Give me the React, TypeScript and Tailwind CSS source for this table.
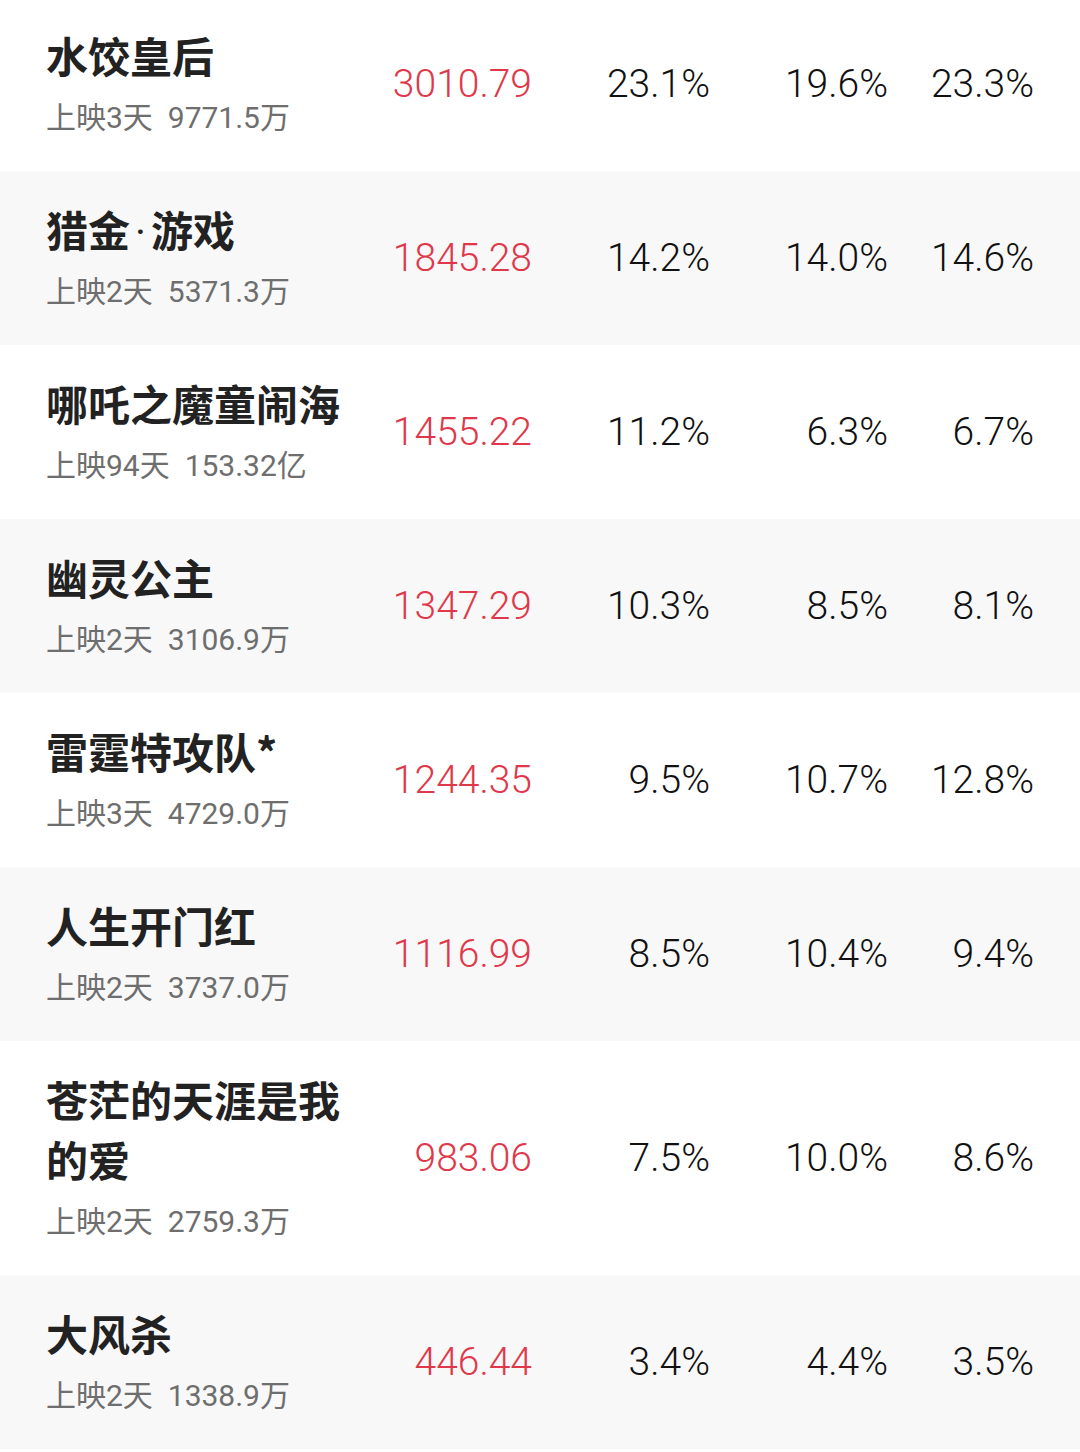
type Movie = {
  name: string;
  days: string;
  total: string;
  box: string;
  share: string;
  shows: string;
  seats: string;
};

const movies: Movie[] = [
  { name: "水饺皇后", days: "上映3天", total: "9771.5万", box: "3010.79", share: "23.1%", shows: "19.6%", seats: "23.3%" },
  { name: "猎金·游戏", days: "上映2天", total: "5371.3万", box: "1845.28", share: "14.2%", shows: "14.0%", seats: "14.6%" },
  { name: "哪吒之魔童闹海", days: "上映94天", total: "153.32亿", box: "1455.22", share: "11.2%", shows: "6.3%", seats: "6.7%" },
  { name: "幽灵公主", days: "上映2天", total: "3106.9万", box: "1347.29", share: "10.3%", shows: "8.5%", seats: "8.1%" },
  { name: "雷霆特攻队*", days: "上映3天", total: "4729.0万", box: "1244.35", share: "9.5%", shows: "10.7%", seats: "12.8%" },
  { name: "人生开门红", days: "上映2天", total: "3737.0万", box: "1116.99", share: "8.5%", shows: "10.4%", seats: "9.4%" },
  { name: "苍茫的天涯是我的爱", days: "上映2天", total: "2759.3万", box: "983.06", share: "7.5%", shows: "10.0%", seats: "8.6%" },
  { name: "大风杀", days: "上映2天", total: "1338.9万", box: "446.44", share: "3.4%", shows: "4.4%", seats: "3.5%" },
];

const numFont = "font-['Roboto','Noto_Sans_CJK_SC',sans-serif]";

// 片名里的间隔号用窄的西文字体，避免占满一个汉字宽
function Title({ name }: { name: string }) {
  const parts = name.split("·");
  if (parts.length === 1) return <>{name}</>;
  return (
    <>
      {parts[0]}
      <span className="font-['Roboto',sans-serif] font-normal leading-none mx-[5px]">·</span>
      {parts[1]}
    </>
  );
}

export default function App() {
  return (
    <div className="w-[1080px] h-[1452px] overflow-hidden bg-white">
      <div className="-mt-[3px]">
        {movies.map((m, i) => (
          <div
            key={m.name}
            className={`flex items-center pl-[46px] ${i % 2 === 1 ? "bg-[#f8f8f8]" : "bg-white"}`}
          >
            {/* 片名 + 上映信息 */}
            <div className="w-[300px] pt-[28px] pb-[33px]">
              <div className="font-['Noto_Sans_CJK_SC',sans-serif] font-bold text-[42px] leading-[60px] text-[#222]">
                <Title name={m.name} />
              </div>
              <div
                className={`mt-[13px] text-[30px] leading-[40px] text-[#6e6e6e] ${numFont}`}
              >
                {m.days}&nbsp; {m.total}
              </div>
            </div>

            <div className={`w-[186px] text-right text-[39px] font-light text-[#e0384a] ${numFont}`}>
              {m.box}
            </div>
            <div className={`w-[178px] text-right text-[39px] font-light text-[#111] ${numFont}`}>
              {m.share}
            </div>
            <div className={`w-[178px] text-right text-[39px] font-light text-[#111] ${numFont}`}>
              {m.shows}
            </div>
            <div className={`w-[146px] text-right text-[39px] font-light text-[#111] ${numFont}`}>
              {m.seats}
            </div>
          </div>
        ))}
      </div>
    </div>
  );
}
